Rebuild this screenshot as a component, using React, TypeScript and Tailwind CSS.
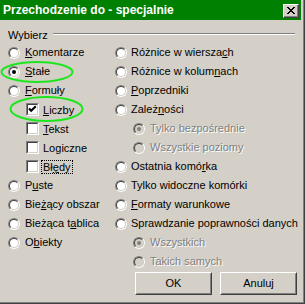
import React from "react";

type Item = {
  label: string;
  u?: number;
  kind?: "radio" | "check";
  checked?: boolean;
  disabled?: boolean;
  indent?: boolean;
  focus?: boolean;
};

const LEFT: Item[] = [
  { label: "Komentarze", u: 0 },
  { label: "Stałe", u: 0, checked: true },
  { label: "Formuły", u: 0 },
  { label: "Liczby", u: 0, kind: "check", checked: true },
  { label: "Tekst", u: 0, kind: "check" },
  { label: "Logiczne", u: 2, kind: "check" },
  { label: "Błędy", u: 2, kind: "check", focus: true },
  { label: "Puste", u: 1 },
  { label: "Bieżący obszar", u: 3 },
  { label: "Bieżąca tablica", u: 9 },
  { label: "Obiekty", u: 1 },
];

const RIGHT: Item[] = [
  { label: "Różnice w wierszach", u: 17 },
  { label: "Różnice w kolumnach", u: 15 },
  { label: "Poprzedniki", u: 0 },
  { label: "Zależności", u: 5 },
  { label: "Tylko bezpośrednie", disabled: true, indent: true, checked: true },
  { label: "Wszystkie poziomy", disabled: true, indent: true },
  { label: "Ostatnia komórka", u: 13 },
  { label: "Tylko widoczne komórki" },
  { label: "Formaty warunkowe", u: 0 },
  { label: "Sprawdzanie poprawności danych" },
  { label: "Wszystkich", disabled: true, indent: true, checked: true },
  { label: "Takich samych", disabled: true, indent: true },
];

function Label({ text, u }: { text: string; u?: number }) {
  if (u === undefined) return <>{text}</>;
  return (
    <>
      {text.slice(0, u)}
      <u className="underline-offset-[1px]">{text[u]}</u>
      {text.slice(u + 1)}
    </>
  );
}

function Radio({ checked, disabled }: { checked?: boolean; disabled?: boolean }) {
  return (
    <span className="flex h-3 w-3 shrink-0 rounded-full border border-t-[#808080] border-l-[#808080] border-b-white border-r-white">
      <span
        className={
          disabled
            ? "flex flex-1 items-center justify-center rounded-full border border-t-[#404040] border-l-[#404040] border-b-[#d4d0c8] border-r-[#d4d0c8] bg-[#d4d0c8]"
            : "flex flex-1 items-center justify-center rounded-full border border-t-[#404040] border-l-[#404040] border-b-[#d4d0c8] border-r-[#d4d0c8] bg-white"
        }
      >
        {checked && (
          <span className={disabled ? "h-1 w-1 rounded-full bg-[#808080]" : "h-1 w-1 rounded-full bg-black"} />
        )}
      </span>
    </span>
  );
}

function Check({ checked }: { checked?: boolean }) {
  return (
    <span className="flex h-[13px] w-[13px] shrink-0 border border-t-[#808080] border-l-[#808080] border-b-white border-r-white">
      <span className="flex flex-1 items-center justify-center border border-t-[#404040] border-l-[#404040] border-b-[#d4d0c8] border-r-[#d4d0c8] bg-white">
        {checked && (
          <svg width="9" height="9" viewBox="0 0 9 9">
            <polyline points="1,3.5 3.2,5.8 7.8,1.2" fill="none" stroke="#000" strokeWidth="2.2" />
          </svg>
        )}
      </span>
    </span>
  );
}

function Row({ item, col }: { item: Item; col: "left" | "right" }) {
  const textClass = item.disabled
    ? "whitespace-nowrap text-[#808080] [text-shadow:1px_1px_0_#fff]"
    : "whitespace-nowrap text-black";
  if (item.kind === "check") {
    return (
      <div className="flex h-[19px] items-center pl-[18px]">
        <Check checked={item.checked} />
        <span
          className={
            item.focus
              ? "ml-[2px] border border-dotted border-black pl-[1px] pr-[1px] leading-[12px] text-black"
              : "ml-[2px] border border-transparent pl-[1px] pr-[1px] leading-[12px] text-black"
          }
        >
          <Label text={item.label} u={item.u} />
        </span>
      </div>
    );
  }
  return (
    <div className={item.indent ? "flex h-[19px] items-center gap-[5px] pl-[18px]" : col === "left" ? "flex h-[19px] items-center gap-[5px]" : "flex h-[19px] items-center gap-[4px]"}>
      <Radio checked={item.checked} disabled={item.disabled} />
      <span className={textClass}>
        <Label text={item.label} u={item.u} />
      </span>
    </div>
  );
}

function Button({ children }: { children: React.ReactNode }) {
  return (
    <div className="flex h-[23px] w-[77px] border border-t-white border-l-white border-b-[#404040] border-r-[#404040]">
      <div className="flex flex-1 items-center justify-center border border-t-[#d4d0c8] border-l-[#d4d0c8] border-b-[#808080] border-r-[#808080] text-black">
        {children}
      </div>
    </div>
  );
}

export default function App() {
  return (
    <div className="relative h-[304px] w-[305px] overflow-hidden bg-[#d4d0c8] font-['Liberation_Sans',Arial,sans-serif] text-[11px] leading-[13px]">
      <div className="flex h-full flex-col border-r border-b border-[#404040]">
        <div className="flex h-full flex-col border-r border-b border-[#808080] pr-[2px]">
          <div className="flex h-[20px] items-center justify-between bg-[#008000] pl-[3px] pr-[2px]">
            <span className="text-[12px] font-bold text-white">Przechodzenie do - specjalnie</span>
            <div className="mt-[2px] flex h-[14px] w-[16px] border border-t-white border-l-white border-b-[#404040] border-r-[#404040] bg-[#d4d0c8]">
              <div className="flex flex-1 items-center justify-center border-b border-r border-[#808080]">
                <svg width="8" height="7" viewBox="0 0 8 7" shapeRendering="crispEdges">
                  <path d="M0.5 0 L7.5 7 M7.5 0 L0.5 7" stroke="#000" strokeWidth="1.8" />
                </svg>
              </div>
            </div>
          </div>

          <div className="mt-[9px] flex h-[13px] items-start pl-[8px] pr-[6px]">
            <span className="text-black">Wybierz</span>
            <div className="ml-[5px] mt-[4px] h-[2px] flex-1 border-t border-b border-t-[#808080] border-b-white" />
          </div>

          <div className="mt-[1px] flex">
            <div className="flex w-[115px] flex-col pl-[8px]">
              {LEFT.map((it) => (
                <Row key={it.label} item={it} col="left" />
              ))}
            </div>
            <div className="flex flex-col">
              {RIGHT.map((it) => (
                <Row key={it.label} item={it} col="right" />
              ))}
            </div>
          </div>

          <div className="mt-[1px] flex gap-[8px] pl-[135px]">
            <Button>OK</Button>
            <Button>Anuluj</Button>
          </div>
        </div>
      </div>

      <svg className="pointer-events-none absolute left-0 top-0" width="305" height="304">
        <ellipse cx="37" cy="72" rx="35.5" ry="10" fill="none" stroke="#1ee61e" strokeWidth="2" />
        <ellipse cx="46.5" cy="109" rx="36" ry="12" fill="none" stroke="#1ee61e" strokeWidth="2" />
      </svg>
    </div>
  );
}
